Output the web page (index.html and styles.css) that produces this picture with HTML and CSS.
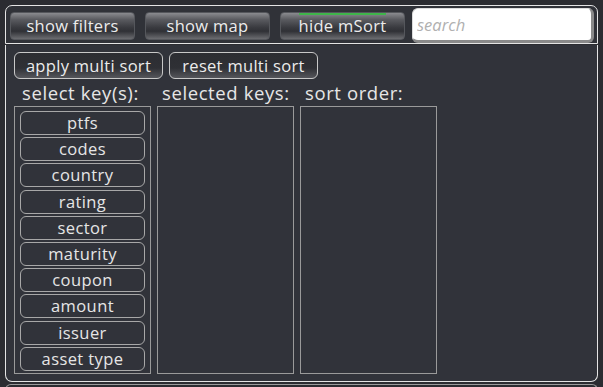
FILE: index.html
```html
<!DOCTYPE html>
<html>
<head>
<meta charset="utf-8">
<link rel="stylesheet" href="styles.css">
</head>
<body>
<div class="wrap">
  <div class="toolbar">
    <button class="tbtn">show filters</button>
    <button class="tbtn">show map</button>
    <button class="tbtn active">hide mSort</button>
    <input class="search" type="text" placeholder="search">
  </div>
  <div class="panel">
    <div class="actions">
      <button class="abtn">apply multi sort</button>
      <button class="abtn">reset multi sort</button>
    </div>
    <div class="cols">
      <div class="col">
        <div class="label">select key(s):</div>
        <div class="box keys">
          <button class="key">ptfs</button>
          <button class="key">codes</button>
          <button class="key">country</button>
          <button class="key">rating</button>
          <button class="key">sector</button>
          <button class="key">maturity</button>
          <button class="key">coupon</button>
          <button class="key">amount</button>
          <button class="key">issuer</button>
          <button class="key">asset type</button>
        </div>
      </div>
      <div class="col">
        <div class="label">selected keys:</div>
        <div class="box"></div>
      </div>
      <div class="col">
        <div class="label">sort order:</div>
        <div class="box"></div>
      </div>
    </div>
  </div>
  <div class="next"></div>
</div>
</body>
</html>
```

FILE: styles.css
```css
html, body {
  margin: 0;
  padding: 0;
  background: #2b2c31;
  font-family: "Open Sans", "Lato", sans-serif;
  color: #e6e6e6;
  overflow: hidden;
}
.wrap {
  padding: 5px 5px 0 5px;
}
.toolbar {
  height: 37px;
  border: 1.5px solid #e4e4e4;
  border-radius: 7px 7px 0 0;
  background: #303238;
  display: flex;
  align-items: center;
  padding-left: 4px;
}
.tbtn {
  position: relative;
  width: 125px;
  height: 28px;
  margin-right: 10px;
  border: 1px solid #55575c;
  border-radius: 4px;
  background: linear-gradient(#8a8b8f 0%, #5a5b60 25%, #3a3b40 55%, #303136 70%, #6b6c70 100%);
  color: #ececec;
  font-family: inherit;
  font-size: 16.5px;
  letter-spacing: 0.3px;
  padding: 0;
  margin-top: 2px;
}
.tbtn.active::before {
  content: "";
  position: absolute;
  left: 18px;
  right: 18px;
  top: 0;
  height: 2px;
  background: #3fb54a;
}
.toolbar .tbtn:nth-child(3) {
  margin-right: 7px;
}
.search {
  width: 182px;
  height: 35px;
  box-sizing: border-box;
  margin-top: 2px;
  border-style: solid;
  border-width: 1px 3px 3px 1px;
  border-color: #dcdcdc #8a8a8a #8a8a8a #dcdcdc;
  border-radius: 6px;
  background: #ffffff;
  font-family: inherit;
  font-style: italic;
  font-size: 16.5px;
  padding: 0 4px;
  outline: none;
}
.search::placeholder {
  color: #b0b0b0;
}
.panel {
  margin-top: 1px;
  height: 329px;
  border: 1.5px solid #e4e4e4;
  border-top: none;
  border-radius: 0 0 7px 7px;
  background: #31333a;
  padding: 7px 8px 0 8px;
}
.actions {
  display: flex;
  gap: 6px;
}
.abtn {
  width: 149px;
  height: 27px;
  border: 1px solid #c8c8c8;
  border-radius: 6px;
  background: linear-gradient(#2c2d32 0%, #2f3035 60%, #55565b 100%);
  color: #ececec;
  font-family: inherit;
  font-size: 16.5px;
  letter-spacing: 0.3px;
  padding: 0;
}
.cols {
  display: flex;
  gap: 6px;
}
.col {
  width: 137px;
  display: flex;
  flex-direction: column;
}
.label {
  font-size: 18.5px;
  letter-spacing: 0.6px;
  height: 27px;
  line-height: 28px;
  padding-left: 8px;
  white-space: nowrap;
}
.col:nth-child(2) .label,
.col:nth-child(3) .label {
  padding-left: 5px;
}
.box {
  height: 268px;
  border: 1px solid #9a9a9a;
  box-sizing: border-box;
}
.keys {
  display: flex;
  flex-direction: column;
  align-items: center;
  padding-top: 4px;
  gap: 2.2px;
}
.key {
  width: 125px;
  height: 24px;
  border: 1px solid #a8a8a8;
  border-radius: 6px;
  background: transparent;
  color: #e6e6e6;
  font-family: inherit;
  font-size: 16.5px;
  letter-spacing: 0.4px;
  padding: 0;
  line-height: 20px;
}
.next {
  margin-top: 2px;
  height: 10px;
  border-top: 1.5px solid #9a9a9a;
  border-left: 1.5px solid #9a9a9a;
  border-right: 1.5px solid #9a9a9a;
  border-radius: 6px 6px 0 0;
}
```
